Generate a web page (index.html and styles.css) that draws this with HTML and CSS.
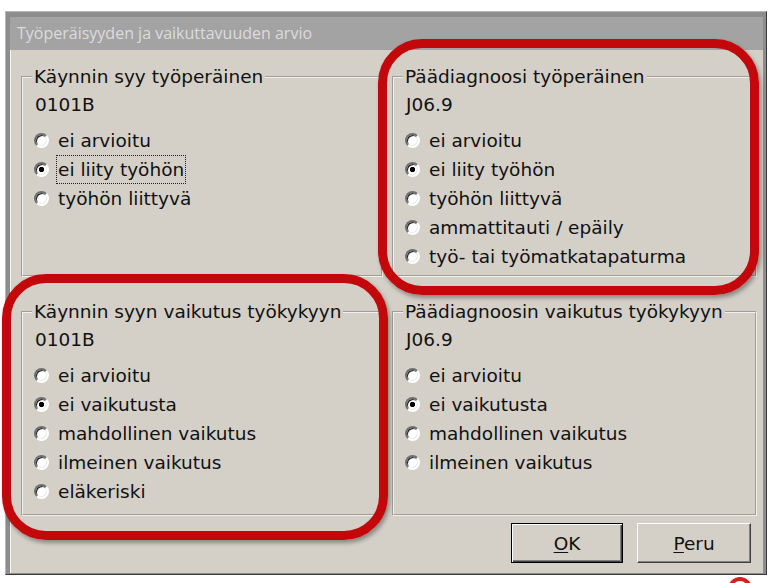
FILE: index.html
```html
<!DOCTYPE HTML>
<html lang="fi">
<head>
    <title>Työperäisyyden ja vaikuttavuuden arvio</title>
    <meta charset="UTF-8">
    <link rel="stylesheet" href="styles.css">
</head>
<body>
<div class="window">
    <div class="titlebar">Työperäisyyden ja vaikuttavuuden arvio</div>
    <div class="client">
        <div class="groups">
            <fieldset class="group">
                <legend>Käynnin syy työperäinen</legend>
                <div class="code">0101B</div>
                <ul class="options">
                    <li><span class="radio"></span><span class="label">ei arvioitu</span></li>
                    <li><span class="radio checked"></span><span class="label focus">ei liity työhön</span></li>
                    <li><span class="radio"></span><span class="label">työhön liittyvä</span></li>
                </ul>
            </fieldset>
            <fieldset class="group">
                <legend>Päädiagnoosi työperäinen</legend>
                <div class="code">J06.9</div>
                <ul class="options">
                    <li><span class="radio"></span><span class="label">ei arvioitu</span></li>
                    <li><span class="radio checked"></span><span class="label">ei liity työhön</span></li>
                    <li><span class="radio"></span><span class="label">työhön liittyvä</span></li>
                    <li><span class="radio"></span><span class="label">ammattitauti / epäily</span></li>
                    <li><span class="radio"></span><span class="label">työ- tai työmatkatapaturma</span></li>
                </ul>
            </fieldset>
            <fieldset class="group">
                <legend>Käynnin syyn vaikutus työkykyyn</legend>
                <div class="code">0101B</div>
                <ul class="options">
                    <li><span class="radio"></span><span class="label">ei arvioitu</span></li>
                    <li><span class="radio checked"></span><span class="label">ei vaikutusta</span></li>
                    <li><span class="radio"></span><span class="label">mahdollinen vaikutus</span></li>
                    <li><span class="radio"></span><span class="label">ilmeinen vaikutus</span></li>
                    <li><span class="radio"></span><span class="label">eläkeriski</span></li>
                </ul>
            </fieldset>
            <fieldset class="group">
                <legend>Päädiagnoosin vaikutus työkykyyn</legend>
                <div class="code">J06.9</div>
                <ul class="options">
                    <li><span class="radio"></span><span class="label">ei arvioitu</span></li>
                    <li><span class="radio checked"></span><span class="label">ei vaikutusta</span></li>
                    <li><span class="radio"></span><span class="label">mahdollinen vaikutus</span></li>
                    <li><span class="radio"></span><span class="label">ilmeinen vaikutus</span></li>
                </ul>
            </fieldset>
        </div>
        <div class="buttons">
            <button class="btn btn-default"><u>O</u>K</button>
            <button class="btn"><u>P</u>eru</button>
        </div>
    </div>
</div>

<!-- red highlight marks drawn over the dialog -->
<div class="mark mark-top"></div>
<div class="mark mark-bottom"></div>
<div class="mark-dot"></div>
</body>
</html>
```

FILE: styles.css
```css
* {
    box-sizing: border-box;
}

html, body {
    margin: 0;
    padding: 0;
    height: 583px;
    overflow: hidden;
    background: #fff;
}

body {
    font-family: "DejaVu Sans", Verdana, sans-serif;
    font-size: 18.5px;
    color: #111;
}

.window {
    margin: 11px 0 0 5px;
    width: 762px;
    height: 564px;
    border: 1px solid;
    border-color: #b8b8b8 #3a3a3a #3a3a3a #b8b8b8;
    padding: 5px 3px 1px 4px;
    background: #8d8d8d;
    display: flex;
    flex-direction: column;
}

.titlebar {
    height: 33px;
    line-height: 33px;
    padding-left: 7px;
    background: #a3a3a3;
    color: #dcdcdc;
    font-family: "Open Sans", "Liberation Sans", sans-serif;
    font-size: 16px;
    white-space: nowrap;
}

.client {
    flex: 1;
    background: #d4d0c8;
    border-left: 1px solid #f4f4f4;
    padding: 17px 0 0 10px;
    display: flex;
    flex-direction: column;
}

.groups {
    display: grid;
    grid-template-columns: 362px 365px;
    grid-template-rows: 210px 214px;
    column-gap: 9px;
    row-gap: 25px;
}

.group {
    margin: 0;
    padding: 0;
    min-width: 0;
    border: 2px groove #f2f0ec;
}

.group legend {
    margin-left: 9px;
    padding: 0 2px;
    line-height: 20px;
    white-space: nowrap;
}

.code {
    margin: 7px 0 0 12px;
    line-height: 22px;
}

.options {
    list-style: none;
    margin: 10px 0 0 11px;
    padding: 0;
}

.options li {
    display: flex;
    align-items: center;
    gap: 9px;
    height: 29px;
    white-space: nowrap;
}

.radio {
    flex: none;
    width: 15px;
    height: 15px;
    border-radius: 50%;
    border: 2px solid;
    border-color: #6e6e6e #fff #fff #6e6e6e;
    background: #fff;
    box-shadow: inset 1px 1px 0 #1e1e1e, inset -1px -1px 0 #ecebe7;
}

.radio.checked {
    background: radial-gradient(circle, #000 2.4px, #fff 3px);
}

.label.focus {
    display: inline-block;
    line-height: 27px;
    padding: 0 1px;
    margin-left: -1px;
    outline: 1px dotted #222;
}

.buttons {
    margin-top: 7px;
    display: flex;
    justify-content: flex-end;
    gap: 14px;
    padding-right: 12px;
}

.btn {
    height: 40px;
    width: 114px;
    padding: 0;
    font-family: inherit;
    font-size: 18.5px;
    color: #111;
    background: #d4d0c8;
    border: 1px solid;
    border-color: #fff #404040 #404040 #fff;
    box-shadow: inset -1px -1px 0 #808080;
}

.btn-default {
    width: 112px;
    border: 1px solid #000;
    box-shadow: inset 1px 1px 0 #fff, inset -1px -1px 0 #404040, inset -2px -2px 0 #808080;
}

.btn u {
    text-decoration-thickness: 1px;
    text-underline-offset: 2px;
}

.mark {
    position: absolute;
    border: 9px solid #c3080c;
    border-radius: 44px;
    box-shadow: 2px 3px 4px rgba(0, 0, 0, 0.35);
}

.mark-top {
    left: 378px;
    top: 39px;
    width: 381px;
    height: 256px;
}

.mark-bottom {
    left: 2px;
    top: 274px;
    width: 386px;
    height: 266px;
}

.mark-dot {
    position: absolute;
    left: 728px;
    top: 577px;
    width: 24px;
    height: 24px;
    border-radius: 50%;
    border: 4px solid #d42020;
}
```
